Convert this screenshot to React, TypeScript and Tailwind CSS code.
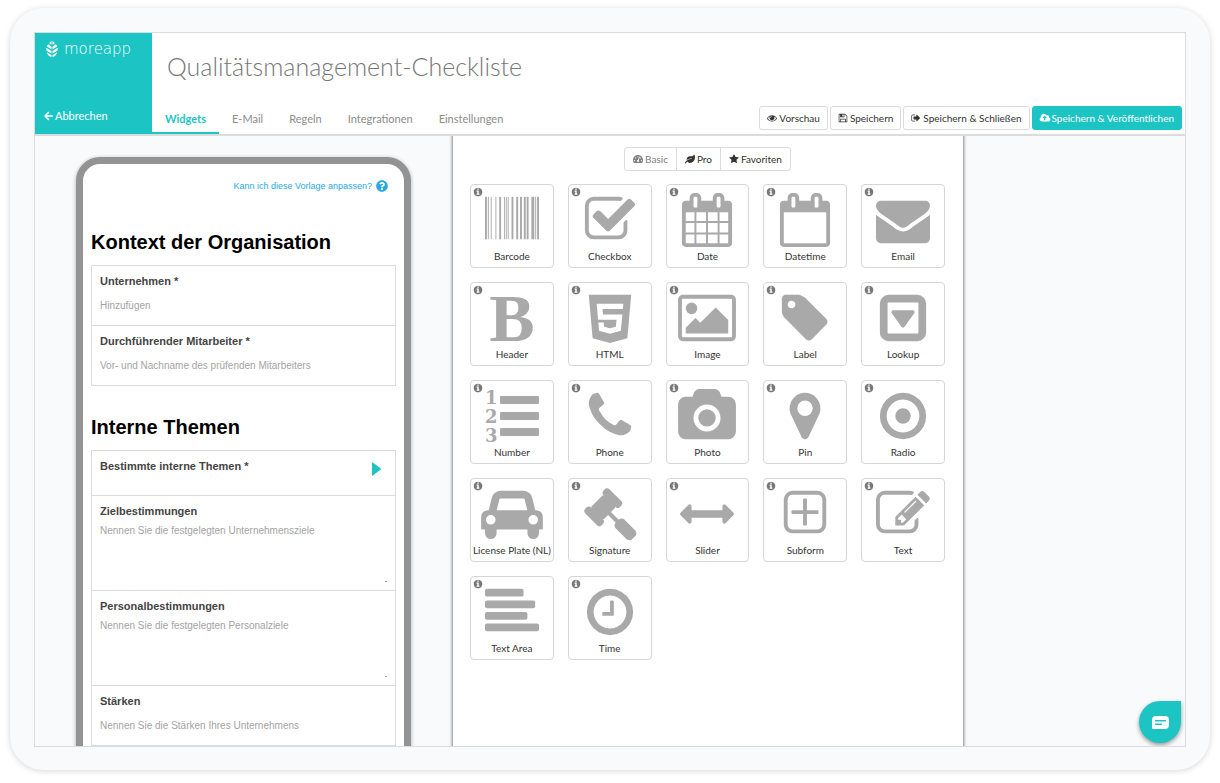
import React, { useState } from 'react';
import { FaArrowLeft, FaLeaf, FaQuestionCircle, FaTachometerAlt } from 'react-icons/fa';

const PATHS = {
    eye: 'M1664 960q-152-236-381-353 61 104 61 225 0 185-131.5 316.5t-316.5 131.5-316.5-131.5-131.5-316.5q0-121 61-225-229 117-381 353 133 205 333.5 326.5t434.5 121.5 434.5-121.5 333.5-326.5zm-720-384q0-20-14-34t-34-14q-125 0-214.5 89.5t-89.5 214.5q0 20 14 34t34 14 34-14 14-34q0-86 61-147t147-61q20 0 34-14t14-34zm848 384q0 34-20 69-140 230-376.5 368.5t-499.5 138.5-499.5-139-376.5-368q-20-35-20-69t20-69q140-229 376.5-368t499.5-139 499.5 139 376.5 368q20 35 20 69z',
    save: 'M512 1536h768v-384h-768v384zm896 0h128v-896q0-14-10-38.5t-20-34.5l-281-281q-10-10-34-20t-39-10v416q0 40-28 68t-68 28h-576q-40 0-68-28t-28-68v-416h-128v1280h128v-416q0-40 28-68t68-28h832q40 0 68 28t28 68v416zm-384-928v-320q0-13-9.5-22.5t-22.5-9.5h-192q-13 0-22.5 9.5t-9.5 22.5v320q0 13 9.5 22.5t22.5 9.5h192q13 0 22.5-9.5t9.5-22.5zm640 32v928q0 40-28 68t-68 28h-1344q-40 0-68-28t-28-68v-1344q0-40 28-68t68-28h928q40 0 88 20t76 48l280 280q28 28 48 76t20 88z',
    signOut: 'M704 1440q0 4 1 20t.5 26.5-3 23.5-10 19.5-20.5 6.5h-320q-119 0-203.5-84.5t-84.5-203.5v-704q0-119 84.5-203.5t203.5-84.5h320q13 0 22.5 9.5t9.5 22.5q0 4 1 20t.5 26.5-3 23.5-10 19.5-20.5 6.5h-320q-66 0-113 47t-47 113v704q0 66 47 113t113 47h312l11.5 1 11.5 3 8 5.5 7 9 2 13.5zm928-544q0 26-19 45l-544 544q-19 19-45 19t-45-19-19-45v-288h-448q-26 0-45-19t-19-45v-384q0-26 19-45t45-19h448v-288q0-26 19-45t45-19 45 19l544 544q19 19 19 45z',
    cloudUpload: 'M1216 864q0-14-9-23l-352-352q-9-9-23-9t-23 9l-351 351q-10 12-10 24 0 14 9 23t23 9h224v352q0 13 9.5 22.5t22.5 9.5h192q13 0 22.5-9.5t9.5-22.5v-352h224q13 0 22.5-9.5t9.5-22.5zm640 288q0 159-112.5 271.5t-271.5 112.5h-1088q-185 0-316.5-131.5t-131.5-316.5q0-130 70-240t188-165q-2-30-2-43 0-212 150-362t362-150q156 0 285.5 87t188.5 231q71-62 166-62 106 0 181 75t75 181q0 76-41 138 130 31 213.5 135.5t83.5 238.5z',
    star: 'M1728 647q0 22-26 48l-363 354 86 500q1 7 1 20 0 21-10.5 35.5t-30.5 14.5q-19 0-40-12l-449-236-449 236q-22 12-40 12-21 0-31.5-14.5t-10.5-35.5q0-6 2-20l86-500-364-354q-25-27-25-48 0-37 56-46l502-73 225-455q19-41 49-41t49 41l225 455 502 73q56 9 56 46z',
    info: 'M1152 1376v-160q0-14-9-23t-23-9h-96v-512q0-14-9-23t-23-9h-320q-14 0-23 9t-9 23v160q0 14 9 23t23 9h96v320h-96q-14 0-23 9t-9 23v160q0 14 9 23t23 9h448q14 0 23-9t9-23zm-128-896v-160q0-14-9-23t-23-9h-192q-14 0-23 9t-9 23v160q0 14 9 23t23 9h192q14 0 23-9t9-23zm640 416q0 209-103 385.5t-279.5 279.5-385.5 103-385.5-103-279.5-279.5-103-385.5 103-385.5 279.5-279.5 385.5-103 385.5 103 279.5 279.5 103 385.5z',
    checkbox: 'M1472 930v318q0 119-84.5 203.5t-203.5 84.5h-832q-119 0-203.5-84.5t-84.5-203.5v-832q0-119 84.5-203.5t203.5-84.5h832q63 0 117 25 15 7 18 23 3 17-9 29l-49 49q-10 10-23 10-3 0-9-2-23-6-45-6h-832q-66 0-113 47t-47 113v832q0 66 47 113t113 47h832q66 0 113-47t47-113v-254q0-13 9-22l64-64q10-10 23-10 6 0 12 3 20 8 20 29zm231-489l-814 814q-24 24-57 24t-57-24l-430-430q-24-24-24-57t24-57l110-110q24-24 57-24t57 24l263 263 647-647q24-24 57-24t57 24l110 110q24 24 24 57t-24 57z',
    calendar: 'M192 1664h288v-288h-288v288zm352 0h320v-288h-320v288zm-352-352h288v-320h-288v320zm352 0h320v-320h-320v320zm-352-384h288v-288h-288v288zm736 736h320v-288h-320v288zm-384-736h320v-288h-320v288zm768 736h288v-288h-288v288zm-384-352h320v-320h-320v320zm-352-864v-288q0-13-9.5-22.5t-22.5-9.5h-64q-13 0-22.5 9.5t-9.5 22.5v288q0 13 9.5 22.5t22.5 9.5h64q13 0 22.5-9.5t9.5-22.5zm736 864h288v-320h-288v320zm-384-384h320v-288h-320v288zm384 0h288v-288h-288v288zm32-480v-288q0-13-9.5-22.5t-22.5-9.5h-64q-13 0-22.5 9.5t-9.5 22.5v288q0 13 9.5 22.5t22.5 9.5h64q13 0 22.5-9.5t9.5-22.5zm384-64v1280q0 52-38 90t-90 38h-1408q-52 0-90-38t-38-90v-1280q0-52 38-90t90-38h128v-96q0-66 47-113t113-47h64q66 0 113 47t47 113v96h384v-96q0-66 47-113t113-47h64q66 0 113 47t47 113v96h128q52 0 90 38t38 90z',
    calendarEmpty: 'M192 1664h1408v-1024h-1408v1024zm384-1216v-288q0-13-9.5-22.5t-22.5-9.5h-64q-13 0-22.5 9.5t-9.5 22.5v288q0 13 9.5 22.5t22.5 9.5h64q13 0 22.5-9.5t9.5-22.5zm768 0v-288q0-13-9.5-22.5t-22.5-9.5h-64q-13 0-22.5 9.5t-9.5 22.5v288q0 13 9.5 22.5t22.5 9.5h64q13 0 22.5-9.5t9.5-22.5zm384-64v1280q0 52-38 90t-90 38h-1408q-52 0-90-38t-38-90v-1280q0-52 38-90t90-38h128v-96q0-66 47-113t113-47h64q66 0 113 47t47 113v96h384v-96q0-66 47-113t113-47h64q66 0 113 47t47 113v96h128q52 0 90 38t38 90z',
    envelope: 'M1792 710v794q0 66-47 113t-113 47h-1472q-66 0-113-47t-47-113v-794q44 49 101 87 362 246 497 345 57 42 92.5 65.5t94.5 48 110 24.5h2q51 0 110-24.5t94.5-48 92.5-65.5q170-123 498-345 57-39 100-87zm0-294q0 79-49 151t-122 123q-376 261-468 325-10 7-42.5 31t-54 38.8-52 32.5-57.5 27-50 9h-2q-23 0-50-9t-57.5-27-52-32.5-54-38.8-42.5-31q-91-64-262-182.5t-205-142.5q-62-42-117-115.5t-55-136.5q0-78 41.5-130t118.5-52h1472q65 0 112.5 47t47.5 113z',
    html5: 'M1322 597l16-175h-884l47 534h612l-22 228-197 53-196-53-13-140h-175l22 278 362 100h4v-1l359-99 50-544h-644l-15-181h674zm-1130-469h1408l-128 1438-578 162-574-162z',
    image: 'M576 576q0 80-56 136t-136 56-136-56-56-136 56-136 136-56 136 56 56 136zm1024 384v448h-1408v-192l320-320 160 160 512-512zm96-704h-1600q-13 0-22.5 9.5t-9.5 22.5v1216q0 13 9.5 22.5t22.5 9.5h1600q13 0 22.5-9.5t9.5-22.5v-1216q0-13-9.5-22.5t-22.5-9.5zm160 32v1216q0 66-47 113t-113 47h-1600q-66 0-113-47t-47-113v-1216q0-66 47-113t113-47h1600q66 0 113 47t47 113z',
    tag: 'M576 448q0-53-37.5-90.5t-90.5-37.5-90.5 37.5-37.5 90.5 37.5 90.5 90.5 37.5 90.5-37.5 37.5-90.5zm1067 576q0 53-37 90l-491 492q-39 37-91 37-53 0-90-37l-715-716q-38-37-64.5-101t-26.5-117v-416q0-52 38-90t90-38h416q53 0 117 26.5t102 64.5l715 714q37 39 37 91z',
    caretSquare: 'M1273 675q18 35-5 66l-320 448q-19 27-52 27t-52-27l-320-448q-23-31-5-66 17-35 57-35h640q40 0 57 35zm135 701v-960q0-13-9.5-22.5t-22.5-9.5h-960q-13 0-22.5 9.5t-9.5 22.5v960q0 13 9.5 22.5t22.5 9.5h960q13 0 22.5-9.5t9.5-22.5zm256-960v960q0 119-84.5 203.5t-203.5 84.5h-960q-119 0-203.5-84.5t-84.5-203.5v-960q0-119 84.5-203.5t203.5-84.5h960q119 0 203.5 84.5t84.5 203.5z',
    phone: 'M1600 1240q0 27-10 70.5t-21 68.5q-21 50-122 106-94 51-186 51-27 0-53-3.5t-57.5-12.5-47-14.5-55.5-20.5-49-18q-98-35-175-83-127-79-264-216t-216-264q-48-77-83-175-3-9-18-49t-20.5-55.5-14.5-47-12.5-57.5-3.5-53q0-92 51-186 56-101 106-122 25-11 68.5-21t70.5-10q14 0 21 3 18 6 53 76 11 19 30 54t35 63.5 31 53.5q3 4 17.5 25t21.5 35.5 7 28.5q0 20-28.5 50t-62 55-62 53-28.5 46q0 9 5 22.5t8.5 20.5 14 24 11.5 19q76 137 174 235t235 174q2 1 19 11.5t24 14 20.5 8.5 22.5 5q18 0 46-28.5t53-62 55-62 50-28.5q14 0 28.5 7t35.5 21.5 25 17.5q25 15 53.5 31t63.5 35 54 30q70 35 76 53 3 7 3 21z',
    camera: 'M896 672q119 0 203.5 84.5t84.5 203.5-84.5 203.5-203.5 84.5-203.5-84.5-84.5-203.5 84.5-203.5 203.5-84.5zm704-416q106 0 181 75t75 181v896q0 106-75 181t-181 75h-1408q-106 0-181-75t-75-181v-896q0-106 75-181t181-75h224l51-136q19-49 69.5-84.5t103.5-35.5h512q53 0 103.5 35.5t69.5 84.5l51 136h224zm-704 1152q185 0 316.5-131.5t131.5-316.5-131.5-316.5-316.5-131.5-316.5 131.5-131.5 316.5 131.5 316.5 316.5 131.5z',
    pin: 'M1152 640q0-106-75-181t-181-75-181 75-75 181 75 181 181 75 181-75 75-181zm256 0q0 109-33 179l-364 774q-16 33-47.5 52t-67.5 19-67.5-19-46.5-52l-365-774q-33-70-33-179 0-212 150-362t362-150 362 150 150 362z',
    radio: 'M1152 896q0 106-75 181t-181 75-181-75-75-181 75-181 181-75 181 75 75 181zm-256-544q-148 0-273 73t-198 198-73 273 73 273 198 198 273 73 273-73 198-198 73-273-73-273-198-198-273-73zm768 544q0 209-103 385.5t-279.5 279.5-385.5 103-385.5-103-279.5-279.5-103-385.5 103-385.5 279.5-279.5 385.5-103 385.5 103 279.5 279.5 103 385.5z',
    car: 'M352 1088q0-66-47-113t-113-47-113 47-47 113 47 113 113 47 113-47 47-113zm36-320h1016l-89-357q-2-8-14-17.5t-21-9.5h-768q-9 0-21 9.5t-14 17.5zm1372 320q0-66-47-113t-113-47-113 47-47 113 47 113 113 47 113-47 47-113zm160-96v384q0 14-9 23t-23 9h-96v128q0 80-56 136t-136 56-136-56-56-136v-128h-1024v128q0 80-56 136t-136 56-136-56-56-136v-128h-96q-14 0-23-9t-9-23v-384q0-93 65.5-158.5t158.5-65.5h28l105-419q23-94 104-157.5t179-63.5h768q98 0 179 63.5t104 157.5l105 419h28q93 0 158.5 65.5t65.5 158.5z',
    gavel: 'M1771 1536q0 53-37 90l-107 108q-39 37-91 37-53 0-90-37l-363-364q-38-36-38-90 0-53 43-96l-256-256-126 126q-14 14-34 14t-34-14q2 2 12.5 12t12.5 13 10 11.5 10 13.5 6 13.5 5.5 16.5 1.5 18q0 38-28 68-3 3-16.5 18t-19 20.5-18.5 16.5-22 15.5-22 9-26 4.5q-40 0-68-28l-408-408q-28-28-28-68 0-13 4.5-26t9-22 15.5-22 16.5-18.5 20.5-19 18-16.5q30-28 68-28 10 0 18 1.5t16.5 5.5 13.5 6 13.5 10 11.5 10 13 12.5 12 12.5q-14-14-14-34t14-34l348-348q14-14 34-14t34 14q-2-2-12.5-12t-12.5-13-10-11.5-10-13.5-6-13.5-5.5-16.5-1.5-18q0-38 28-68 3-3 16.5-18t19-20.5 18.5-16.5 22-15.5 22-9 26-4.5q40 0 68 28l408 408q28 28 28 68 0 13-4.5 26t-9 22-15.5 22-16.5 18.5-20.5 19-18 16.5q-30 28-68 28-10 0-18-1.5t-16.5-5.5-13.5-6-13.5-10-11.5-10-13-12.5-12-12.5q14 14 14 34t-14 34l-126 126 256 256q43-43 96-43 52 0 91 37l363 363q37 39 37 91z',
    slider: 'M1792 896q0 26-19 45l-256 256q-19 19-45 19t-45-19-19-45v-128h-1024v128q0 26-19 45t-45 19-45-19l-256-256q-19-19-19-45t19-45l256-256q19-19 45-19t45 19 19 45v128h1024v-128q0-26 19-45t45-19 45 19l256 256q19 19 19 45z',
    plusSquare: 'M1344 800v64q0 14-9 23t-23 9h-352v352q0 14-9 23t-23 9h-64q-14 0-23-9t-9-23v-352h-352q-14 0-23-9t-9-23v-64q0-14 9-23t23-9h352v-352q0-14 9-23t23-9h64q14 0 23 9t9 23v352h352q14 0 23 9t9 23zm128 448v-832q0-66-47-113t-113-47h-832q-66 0-113 47t-47 113v832q0 66 47 113t113 47h832q66 0 113-47t47-113zm128-832v832q0 119-84.5 203.5t-203.5 84.5h-832q-119 0-203.5-84.5t-84.5-203.5v-832q0-119 84.5-203.5t203.5-84.5h832q119 0 203.5 84.5t84.5 203.5z',
    edit: 'M888 1184l116-116-152-152-116 116v56h96v96h56zm440-720q-16-16-33 1l-350 350q-17 17-1 33t33-1l350-350q17-17 1-33zm80 594v190q0 119-84.5 203.5t-203.5 84.5h-832q-119 0-203.5-84.5t-84.5-203.5v-832q0-119 84.5-203.5t203.5-84.5h832q63 0 117 25 15 7 18 23 3 17-9 29l-49 49q-14 14-32 8-23-6-45-6h-832q-66 0-113 47t-47 113v832q0 66 47 113t113 47h832q66 0 113-47t47-113v-126q0-13 9-22l64-64q15-15 35-7t20 29zm-96-738l288 288-672 672h-288v-288zm444 132l-92 92-288-288 92-92q28-28 68-28t68 28l152 152q28 28 28 68t-28 68z',
    clock: 'M1024 544v448q0 14-9 23t-23 9h-320q-14 0-23-9t-9-23v-64q0-14 9-23t23-9h224v-352q0-14 9-23t23-9h64q14 0 23 9t9 23zm416 352q0-148-73-273t-198-198-273-73-273 73-198 198-73 273 73 273 198 198 273 73 273-73 198-198 73-273zm224 0q0 209-103 385.5t-279.5 279.5-385.5 103-385.5-103-279.5-279.5-103-385.5 103-385.5 279.5-279.5 385.5-103 385.5 103 279.5 279.5 103 385.5z',
};

// [x, width] of every bar
const BARCODE = [
    [0, 63], [94, 32], [189, 31], [346, 31], [472, 63], [629, 31], [692, 31], [755, 31],
    [880, 63], [1037, 63], [1163, 63], [1289, 63], [1383, 63], [1540, 94], [1666, 32], [1729, 63],
];

interface GlyphProps {
    name: keyof typeof PATHS;
    className: string;
}

const Glyph: React.FC<GlyphProps> = ({ name, className }) => (
    <svg viewBox="0 0 1792 1792" fill="currentColor" aria-hidden="true" className={`shrink-0 overflow-visible ${className}`}>
        <path d={PATHS[name]} />
    </svg>
);

const ICON_SIZE = 'w-[54px] h-[54px]';

const BarcodeIcon = () => (
    <svg viewBox="0 0 1792 1792" fill="currentColor" aria-hidden="true" className={ICON_SIZE}>
        {BARCODE.map(([x, w]) => <rect key={x} x={x} y="128" width={w} height="1408" />)}
    </svg>
);

const HeaderIcon = () => (
    <span aria-hidden="true" className="h-[54px] font-['Liberation_Serif',serif] font-bold text-[68px] leading-[54px]">B</span>
);

const NumberIcon = () => (
    <div aria-hidden="true" className="w-[54px] h-[54px] flex items-center gap-[3px]">
        <div className="flex flex-col font-['DejaVu_Serif',serif] font-bold text-[18px] leading-[19px]">
            <span>1</span>
            <span>2</span>
            <span>3</span>
        </div>
        <div className="flex-1 flex flex-col gap-2">
            <span className="h-2 rounded-[1px] bg-current" />
            <span className="h-2 rounded-[1px] bg-current" />
            <span className="h-2 rounded-[1px] bg-current" />
        </div>
    </div>
);

const TextAreaIcon = () => (
    <svg viewBox="0 0 1792 1792" fill="currentColor" aria-hidden="true" className={ICON_SIZE}>
        <rect y="128" width="1280" height="256" rx="64" />
        <rect y="512" width="1664" height="256" rx="64" />
        <rect y="896" width="1408" height="256" rx="64" />
        <rect y="1280" width="1792" height="256" rx="64" />
    </svg>
);

const big = (name: keyof typeof PATHS) => <Glyph name={name} className={ICON_SIZE} />;

const WIDGETS = [
    { label: 'Barcode', icon: <BarcodeIcon /> },
    { label: 'Checkbox', icon: big('checkbox') },
    { label: 'Date', icon: big('calendar') },
    { label: 'Datetime', icon: big('calendarEmpty') },
    { label: 'Email', icon: big('envelope') },
    { label: 'Header', icon: <HeaderIcon /> },
    { label: 'HTML', icon: big('html5') },
    { label: 'Image', icon: big('image') },
    { label: 'Label', icon: big('tag') },
    { label: 'Lookup', icon: big('caretSquare') },
    { label: 'Number', icon: <NumberIcon /> },
    { label: 'Phone', icon: big('phone') },
    { label: 'Photo', icon: big('camera') },
    { label: 'Pin', icon: big('pin') },
    { label: 'Radio', icon: big('radio') },
    { label: 'License Plate (NL)', icon: big('car') },
    { label: 'Signature', icon: big('gavel') },
    { label: 'Slider', icon: big('slider') },
    { label: 'Subform', icon: big('plusSquare') },
    { label: 'Text', icon: big('edit') },
    { label: 'Text Area', icon: <TextAreaIcon /> },
    { label: 'Time', icon: big('clock') },
];

const TABS = ['Widgets', 'E-Mail', 'Regeln', 'Integrationen', 'Einstellungen'];

const Logo = () => (
    <div className="flex items-center gap-[6px] pl-[11px] pt-[6px] text-white">
        <svg viewBox="0 0 24 32" fill="currentColor" aria-hidden="true" className="w-3 h-4">
            <path d="M11 0v7.500L6.500 4.500Q8 1.500 11 0zM13 0v7.500l4.500-3Q16 1.500 13 0z" />
            <path d="M4.500 6.500L11 11.500v5L1.800 11Q2.500 8 4.500 6.500zM19.500 6.500L13 11.500v5L22.200 11Q21.500 8 19.500 6.500z" />
            <path d="M1 13.500L11 20v5L.8 19Q0 16 1 13.500zM23 13.500L13 20v5l10.200-6Q24 16 23 13.500z" />
            <path d="M1.500 22.500L11 28v4Q4 30.500 1.500 22.500zM22.500 22.500L13 28v4q7-1.500 9.500-9.500z" />
        </svg>
        <span className="font-['DejaVu_Sans',sans-serif] font-extralight text-[15px] leading-5">moreapp</span>
    </div>
);

interface ActionButtonProps {
    icon: keyof typeof PATHS;
    label: string;
    primary?: boolean;
}

const ActionButton: React.FC<ActionButtonProps> = ({ icon, label, primary }) => (
    <button
        type="button"
        className={`h-6 px-[7px] flex items-center gap-[2px] rounded-[3px] border text-[10px] whitespace-nowrap ${
            primary ? 'bg-[#1cc4c4] border-[#1cc4c4] text-white' : 'bg-white border-[#dcdcdc] text-[#333]'
        }`}
    >
        <Glyph name={icon} className="w-[10px] h-[10px]" />
        {label}
    </button>
);

const Header = () => {
    const [active, setActive] = useState('Widgets');

    return (
        <header className="flex bg-white border-b-2 border-[#dcdcdc]">
            <div className="w-[117px] shrink-0 flex flex-col justify-between bg-[#1cc4c4]">
                <Logo />
                <button type="button" className="flex items-center gap-[2px] pl-[9px] pb-[9px] text-[11px] leading-[18px] text-white">
                    <FaArrowLeft className="w-[9px] h-[10px]" />
                    Abbrechen
                </button>
            </div>
            <div className="flex-1 min-w-0 flex flex-col">
                <h1 className="pt-[15px] pl-[15px] text-[25px] leading-9 font-light text-[#777]">Qualitätsmanagement-Checkliste</h1>
                <div className="mt-[21px] flex items-end justify-between">
                    <nav className="flex">
                        {TABS.map(tab => (
                            <button
                                type="button"
                                key={tab}
                                onClick={() => setActive(tab)}
                                className={`h-[29px] px-[13px] pt-[1px] border-b-2 text-[11px] ${
                                    active === tab ? 'border-[#1cc4c4] text-[#1cc4c4] font-bold' : 'border-transparent text-[#8c8c8c]'
                                }`}
                            >
                                {tab}
                            </button>
                        ))}
                    </nav>
                    <div className="flex gap-[2px] pr-[3px] pb-1">
                        <ActionButton icon="eye" label="Vorschau" />
                        <ActionButton icon="save" label="Speichern" />
                        <ActionButton icon="signOut" label="Speichern & Schließen" />
                        <ActionButton icon="cloudUpload" label="Speichern & Veröffentlichen" primary />
                    </div>
                </div>
            </div>
        </header>
    );
};

interface FieldProps {
    id: string;
    label: string;
    placeholder?: string;
    kind: 'input' | 'textarea' | 'lookup';
}

const Field: React.FC<FieldProps> = ({ id, label, placeholder, kind }) => {
    const labelClass = 'block text-[11px] leading-[14px] font-bold text-[#444]';
    const inputClass = 'block w-full bg-transparent text-[10px] leading-[14px] text-[#444] placeholder-[#a3a3a3] outline-none';

    if (kind === 'lookup') {
        return (
            <button type="button" className="w-full h-[45px] px-2 pt-2 flex items-start justify-between text-left border-b border-[#dcdcdc]">
                <span className={labelClass}>{label}</span>
                <svg viewBox="0 0 9 14" aria-hidden="true" className="mt-[3px] mr-[6px] w-[9px] h-[14px] fill-[#1cc4c4]">
                    <path d="M0 .5Q0 0 .5.300L8.700 6.600Q9 7 8.700 7.400L.5 13.700Q0 14 0 13.500z" />
                </svg>
            </button>
        );
    }

    if (kind === 'textarea') {
        return (
            <div className="relative h-[95px] px-2 pt-2 border-b border-[#dcdcdc]">
                <label htmlFor={id} className={labelClass}>{label}</label>
                <textarea id={id} placeholder={placeholder} className={`mt-[6px] h-14 resize-none ${inputClass}`} />
                <span className="absolute right-2 bottom-2 w-[2px] h-px bg-[#999]" />
            </div>
        );
    }

    return (
        <div className="h-[60px] px-2 pt-2 border-b border-[#dcdcdc]">
            <label htmlFor={id} className={labelClass}>{label}</label>
            <input id={id} type="text" placeholder={placeholder} className={`mt-[11px] ${inputClass}`} />
        </div>
    );
};

const PhonePreview = () => (
    <section className="w-[335px] max-w-full shrink-0 self-start mt-[21px] pt-4 px-2 pb-8 bg-white border-[7px] border-[#939393] rounded-[24px] shadow-[0_1px_4px_rgba(0,0,0,0.3)] font-['Liberation_Sans',Arial,sans-serif]">
        <a href="#vorlage" className="flex items-center justify-end gap-1 pr-2 text-[9px] leading-[12px] text-[#27aae1]">
            Kann ich diese Vorlage anpassen?
            <FaQuestionCircle className="w-3 h-3" />
        </a>
        <h2 className="mt-9 mb-[9px] text-[20px] leading-7 font-bold text-black">Kontext der Organisation</h2>
        <div className="border-x border-t border-[#dcdcdc]">
            <Field id="unternehmen" label="Unternehmen *" placeholder="Hinzufügen" kind="input" />
            <Field id="mitarbeiter" label="Durchführender Mitarbeiter *" placeholder="Vor- und Nachname des prüfenden Mitarbeiters" kind="input" />
        </div>
        <h2 className="mt-[27px] mb-[9px] text-[20px] leading-7 font-bold text-black">Interne Themen</h2>
        <div className="border-x border-t border-[#dcdcdc]">
            <Field id="themen" label="Bestimmte interne Themen *" kind="lookup" />
            <Field id="ziele" label="Zielbestimmungen" placeholder="Nennen Sie die festgelegten Unternehmensziele" kind="textarea" />
            <Field id="personal" label="Personalbestimmungen" placeholder="Nennen Sie die festgelegten Personalziele" kind="textarea" />
            <Field id="staerken" label="Stärken" placeholder="Nennen Sie die Stärken Ihres Unternehmens" kind="input" />
        </div>
    </section>
);

const WidgetPanel = () => (
    <section className="min-w-0 pl-[17px] pr-[18px] bg-white border-x border-[#b0b0b0] shadow-[0_0_2px_1px_rgba(0,0,0,0.25)]">
        <div className="mt-[11px] flex justify-center">
            <div className="h-6 flex border border-[#dcdcdc] rounded-[3px] divide-x divide-[#dcdcdc] text-[10px] text-[#333]">
                <button type="button" className="px-2 flex items-center gap-[2px] text-[#808080]">
                    <FaTachometerAlt className="w-[10px] h-[10px]" />
                    Basic
                </button>
                <button type="button" className="px-2 flex items-center gap-[2px]">
                    <FaLeaf className="w-[10px] h-[10px]" />
                    Pro
                </button>
                <button type="button" className="px-2 flex items-center gap-[2px]">
                    <Glyph name="star" className="w-[10px] h-[10px]" />
                    Favoriten
                </button>
            </div>
        </div>
        <div className="mt-[13px] grid grid-cols-5 gap-[14px]">
            {WIDGETS.map(widget => (
                <button
                    type="button"
                    key={widget.label}
                    className="relative h-[84px] pt-2 flex flex-col items-center bg-white border border-[#d6d6d6] rounded-[4px] text-[#a9a9a9]"
                >
                    <Glyph name="info" className="absolute left-[2px] top-[2px] w-[10px] h-[10px] text-[#777]" />
                    {widget.icon}
                    <span className="mt-[2px] text-[10px] leading-[14px] text-[#333] whitespace-nowrap">{widget.label}</span>
                </button>
            ))}
        </div>
    </section>
);

const ChatButton = () => (
    <button
        type="button"
        aria-label="Chat"
        className="absolute right-1 bottom-[3px] w-[42px] h-[42px] flex items-center justify-center bg-[#1cc4c4] rounded-full rounded-tr-[5px] shadow-[0_2px_4px_rgba(0,0,0,0.4)]"
    >
        <svg viewBox="0 0 17 13" aria-hidden="true" className="w-[17px] h-[13px]">
            <path d="M4 0h9q4 0 4 4v5q0 4-4 4H1q-1 0-1-1V4q0-4 4-4z" fill="#fff" />
            <path d="M3.500 4.700h10M3.500 8.200h6" stroke="#1cc4c4" strokeWidth="1.400" strokeLinecap="round" />
        </svg>
    </button>
);

export default function App() {
    return (
        <div className="h-screen px-[10px] pt-2 pb-[13px] bg-white font-[Lato,sans-serif]">
            <div className="h-full px-6 pt-6 pb-[23px] bg-[#f8fafc] rounded-[34px] shadow-[0_1px_6px_rgba(0,0,0,0.16)]">
                <main className="relative h-full flex flex-col border border-[#dcdcdc] overflow-hidden">
                    <Header />
                    <div className="flex-1 min-h-0 grid grid-cols-[417fr_512fr_221fr] overflow-hidden">
                        <div className="min-w-0 flex justify-center overflow-hidden">
                            <PhonePreview />
                        </div>
                        <WidgetPanel />
                    </div>
                    <ChatButton />
                </main>
            </div>
        </div>
    );
}
